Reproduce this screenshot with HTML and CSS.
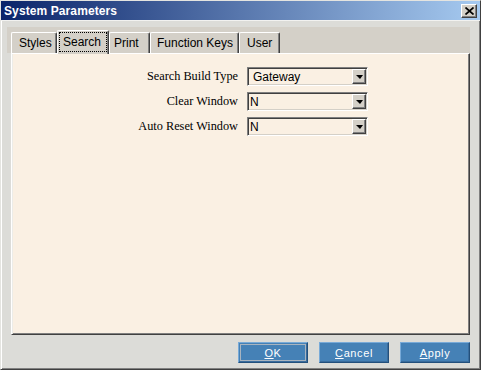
FILE: index.html
```html
<!DOCTYPE html>
<html>
<head>
<meta charset="utf-8">
<link rel="stylesheet" href="styles.css">
</head>
<body>
<div class="window">
  <div class="titlebar">
    <span class="title">System Parameters</span>
    <button class="close" type="button" aria-label="Close">
      <svg width="9" height="8" viewBox="0 0 9 8"><path d="M0.5 0.5 L8.5 7.5 M8.5 0.5 L0.5 7.5" stroke="#000" stroke-width="1.7" fill="none"/></svg>
    </button>
  </div>
  <div class="content">
    <div class="tabstrip">
      <div class="tab tab-styles">Styles</div>
      <div class="tab tab-search selected"><span class="focus">Search</span></div>
      <div class="tab tab-print">Print</div>
      <div class="tab tab-fkeys">Function Keys</div>
      <div class="tab tab-user">User</div>
    </div>
    <div class="panel">
      <div class="form">
        <label class="lbl">Search Build Type</label>
        <div class="combo"><span class="val val-wide">Gateway</span><span class="drop"><span class="arrow"></span></span></div>
        <label class="lbl">Clear Window</label>
        <div class="combo"><span class="val">N</span><span class="drop"><span class="arrow"></span></span></div>
        <label class="lbl">Auto Reset Window</label>
        <div class="combo"><span class="val">N</span><span class="drop"><span class="arrow"></span></span></div>
      </div>
    </div>
    <div class="buttons">
      <button class="btn default" type="button"><span class="inner"><u>O</u>K</span></button>
      <button class="btn" type="button"><span class="inner"><u>C</u>ancel</span></button>
      <button class="btn" type="button"><span class="inner"><u>A</u>pply</span></button>
    </div>
  </div>
</div>
</body>
</html>
```

FILE: styles.css
```css
html, body {
  margin: 0;
  padding: 0;
  background: #dcdcd8;
}

.window {
  box-sizing: border-box;
  width: 481px;
  height: 370px;
  background: #dcdcd8;
  border: 1px solid;
  border-color: #e4e4e0 #404040 #404040 #e4e4e0;
  box-shadow: inset 1px 1px #ffffff, inset -1px -1px #808080;
  font-family: "Liberation Sans", Arial, sans-serif;
}

.titlebar {
  height: 19px;
  display: flex;
  align-items: center;
  justify-content: space-between;
  padding: 0 3px 0 3px;
  background: linear-gradient(to right, #0a246a, #a6caf0);
  border-bottom: 1px solid #f2f2f0;
}

.title {
  color: #ffffff;
  font-weight: bold;
  font-size: 12px;
  letter-spacing: 0.1px;
}

.close {
  box-sizing: border-box;
  width: 16px;
  height: 14px;
  padding: 0;
  margin: 0;
  background: #d4d0c8;
  border: 1px solid;
  border-color: #ffffff #404040 #404040 #ffffff;
  box-shadow: inset -1px -1px #808080;
  display: flex;
  align-items: center;
  justify-content: center;
}

.content {
  padding: 6px 10px 0 10px;
}

.tabstrip {
  display: flex;
  align-items: flex-end;
  height: 26px;
  margin-left: -4px;
  padding-left: 4px;
  background: #d4d0c8;
  position: relative;
  z-index: 1;
}

.tab {
  box-sizing: border-box;
  height: 21px;
  display: flex;
  align-items: center;
  padding-left: 6px;
  font-size: 12px;
  color: #000000;
  background: #d4d0c8;
  border-top: 1px solid #ffffff;
  border-left: 1px solid #ffffff;
  border-right: 1px solid #404040;
  box-shadow: inset -1px 0 #808080;
  border-radius: 2px 2px 0 0;
}

.tab-styles { width: 46px; padding-left: 7px; }
.tab-search { width: 52px; }
.tab-print { width: 41px; padding-left: 4px; }
.tab-fkeys { width: 89px; }
.tab-user { width: 41px; padding-left: 7px; }

.tab.selected {
  height: 24px;
  margin-bottom: -1px;
  padding: 1px 1px 2px 1px;
  align-items: stretch;
}

.focus {
  flex: 1;
  display: flex;
  align-items: center;
  padding-left: 4px;
  outline: 1px dotted #000000;
  outline-offset: -1px;
}

.panel {
  box-sizing: border-box;
  height: 282px;
  background: #faf0e3;
  border-left: 1px solid #ffffff;
  border-top: 1px solid #ffffff;
  border-right: 1px solid #404040;
  border-bottom: 1px solid #404040;
  box-shadow: inset 1px 0 #ecece8, inset -1px -1px #808080;
  padding: 13px 0 0 1px;
}

.form {
  display: grid;
  grid-template-columns: 225px 121px;
  column-gap: 9px;
  row-gap: 6px;
  align-items: center;
}

.lbl {
  text-align: right;
  font-family: "Liberation Serif", "Times New Roman", serif;
  font-size: 12.3px;
  color: #000000;
}

.combo {
  box-sizing: border-box;
  height: 19px;
  display: flex;
  align-items: center;
  background: #faf0e3;
  border: 1px solid;
  border-color: #808080 #ffffff #ffffff #808080;
  box-shadow: inset 1px 1px #404040, inset -1px -1px #d4d0c8;
  padding: 1px;
}

.val {
  flex: 1;
  font-size: 12px;
  padding-left: 1px;
  color: #000000;
}

.val-wide { padding-left: 4px; }

.drop {
  box-sizing: border-box;
  width: 14px;
  height: 15px;
  background: #d4d0c8;
  border: 1px solid;
  border-color: #ffffff #404040 #404040 #ffffff;
  box-shadow: inset -1px -1px #808080;
  display: flex;
  align-items: center;
  justify-content: center;
}

.arrow {
  width: 0;
  height: 0;
  border-left: 4px solid transparent;
  border-right: 3px solid transparent;
  border-top: 4px solid #000000;
  margin-top: 1px;
}

.buttons {
  display: flex;
  justify-content: flex-end;
  gap: 11px;
  margin-top: 7px;
}

.btn {
  box-sizing: border-box;
  width: 70px;
  height: 21px;
  padding: 0;
  margin: 0;
  background: #4581b6;
  border: 1px solid;
  border-color: #78aad8 #23507c #23507c #78aad8;
  box-shadow: inset -1px -1px #3a6c9c;
  color: #ffffff;
  font-family: "Liberation Sans", Arial, sans-serif;
  font-size: 11px;
  letter-spacing: 0.6px;
  display: flex;
}

.btn .inner {
  flex: 1;
  display: flex;
  align-items: center;
  justify-content: center;
}

.btn.default .inner {
  margin: 1px;
  border: 1px solid #a8b4c0;
}
```
